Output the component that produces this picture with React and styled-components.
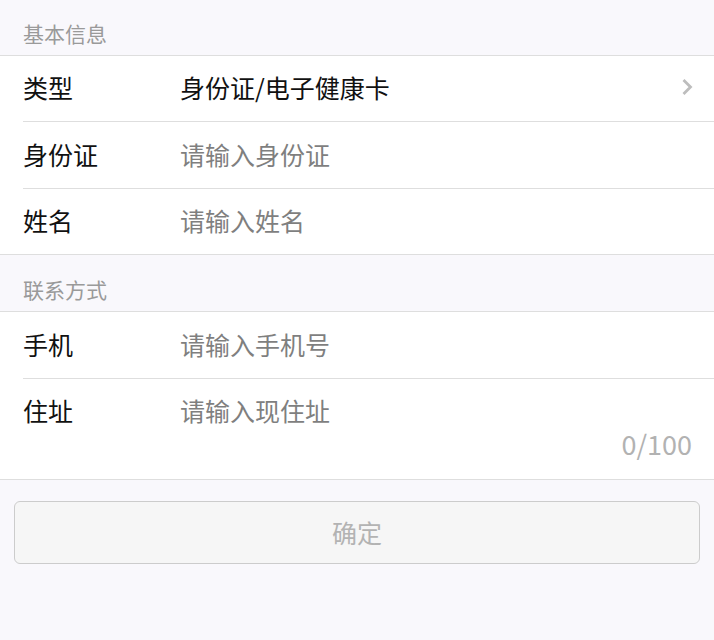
import React, { useState } from "react";
import styled, { createGlobalStyle } from "styled-components";

const GlobalStyle = createGlobalStyle`
  html, body {
    margin: 0;
    padding: 0;
    background: #f9f8fc;
  }
  body {
    font-family: "Noto Sans CJK SC", "Noto Sans", sans-serif;
  }
  * { box-sizing: border-box; }
`;

const Page = styled.div`
  width: 714px;
  min-height: 640px;
  background: #f9f8fc;
`;

const GroupTitle = styled.div`
  height: ${p => (p.first ? "56px" : "57px")};
  padding: 0 23px 8px;
  display: flex;
  align-items: flex-end;
  font-size: 21px;
  line-height: 28px;
  color: #9a9a9a;
  border-bottom: 1px solid #dedede;
`;

const Group = styled.div`
  background: #ffffff;
  border-bottom: 1px solid #dedede;
`;

const Row = styled.div`
  margin-left: 23px;
  padding-right: 20px;
  padding-bottom: ${p => (p.tall ? "0" : "3px")};
  height: ${p => (p.tall ? "100px" : p.h || "66px")};
  display: flex;
  align-items: ${p => (p.tall ? "flex-start" : "center")};
  border-bottom: ${p => (p.last ? "none" : "1px solid #dedede")};
`;

const Label = styled.div`
  width: 157px;
  flex-shrink: 0;
  font-size: 25px;
  color: #111111;
  line-height: ${p => (p.top ? "62px" : "34px")};
`;

const Value = styled.div`
  flex: 1;
  font-size: 25px;
  color: #111111;
`;

const Input = styled.input`
  flex: 1;
  border: none;
  outline: none;
  background: transparent;
  padding: 0;
  font-family: inherit;
  font-size: 25px;
  color: #111111;
  &::placeholder {
    color: #7f7f7f;
  }
`;

const Area = styled.div`
  flex: 1;
  display: flex;
  flex-direction: column;
`;

const TextArea = styled.textarea`
  border: none;
  outline: none;
  resize: none;
  background: transparent;
  padding: 0;
  margin-top: 14px;
  height: 34px;
  font-family: inherit;
  font-size: 25px;
  line-height: 34px;
  color: #111111;
  &::placeholder {
    color: #7f7f7f;
  }
`;

const Counter = styled.div`
  align-self: flex-end;
  font-size: 27px;
  color: #b2b2b2;
  line-height: 30px;
  margin-top: 2px;
  margin-right: 2px;
`;

const Chevron = styled.svg`
  width: 14px;
  height: 18px;
  flex-shrink: 0;
`;

const Footer = styled.div`
  padding: 21px 14px;
`;

const Button = styled.button`
  width: 100%;
  height: 63px;
  border: 1px solid #cccccc;
  border-radius: 6px;
  background: #f6f6f6;
  color: #b3b3b3;
  font-family: inherit;
  font-size: 25px;
  padding-bottom: 3px;
`;

export default function App() {
  const [address, setAddress] = useState("");

  return (
    <Page>
      <GlobalStyle />
      <GroupTitle first>基本信息</GroupTitle>
      <Group>
        <Row>
          <Label>类型</Label>
          <Value>身份证/电子健康卡</Value>
          <Chevron viewBox="0 0 14 18">
            <path d="M3.5 2 L10.5 9 L3.5 16" fill="none" stroke="#bdbdbd" strokeWidth="2.8" />
          </Chevron>
        </Row>
        <Row h="67px">
          <Label>身份证</Label>
          <Input placeholder="请输入身份证" />
        </Row>
        <Row h="65px" last>
          <Label>姓名</Label>
          <Input placeholder="请输入姓名" />
        </Row>
      </Group>
      <GroupTitle>联系方式</GroupTitle>
      <Group>
        <Row h="67px">
          <Label>手机</Label>
          <Input placeholder="请输入手机号" />
        </Row>
        <Row tall last>
          <Label top>住址</Label>
          <Area>
            <TextArea
              placeholder="请输入现住址"
              maxLength={100}
              value={address}
              onChange={e => setAddress(e.target.value)}
            />
            <Counter>{address.length}/100</Counter>
          </Area>
        </Row>
      </Group>
      <Footer>
        <Button>确定</Button>
      </Footer>
    </Page>
  );
}
